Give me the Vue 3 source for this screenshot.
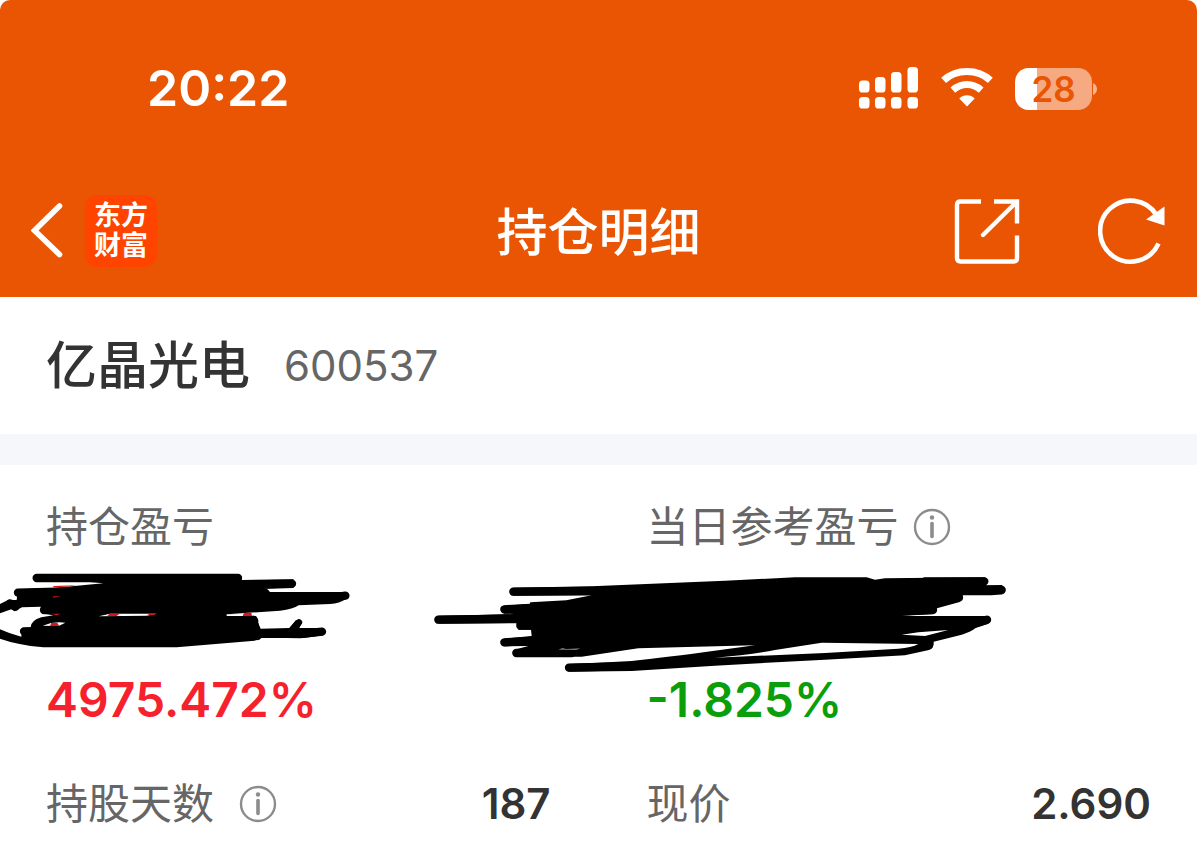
<template>
  <div class="page">
    <header class="header">
      <div class="status-bar">
        <span class="time">20:22</span>
        <div class="status-icons">
          <svg class="signal" width="60" height="43" viewBox="0 0 60 43" fill="#fff">
            <rect v-for="bar in signalBars" :key="bar.x" :x="bar.x" :y="bar.y" width="10.5" :height="25.5 - bar.y" rx="3.6" />
            <rect v-for="bar in signalBars" :key="'d' + bar.x" :x="bar.x" y="30" width="10.5" height="11.5" rx="3.6" />
          </svg>
          <svg class="wifi" width="52" height="42" viewBox="0 1 52 42">
            <g fill="none" stroke="#fff" stroke-width="7">
              <path d="M2.6 13.4Q12 4.5 26 4.5T49.4 13.4" />
              <path d="M11.8 23.2Q18 17.6 26 17.6T40.2 23.2" />
            </g>
            <path d="M26 39.5L18.3 31.6Q21.6 28.3 26 28.3T33.7 31.6Z" fill="#fff" />
          </svg>
          <div class="battery">
            <div class="battery-body">
              <div class="battery-level" :style="{ width: batteryLevel + '%' }"></div>
              <span class="battery-text">{{ batteryLevel }}</span>
            </div>
            <svg width="5" height="12" viewBox="0 0 5 12">
              <path d="M0 0Q4 2 4 6T0 12Z" fill="#f6b291" />
            </svg>
          </div>
        </div>
      </div>

      <nav class="nav-bar">
        <div class="nav-left">
          <button class="icon-btn" type="button" aria-label="返回">
            <svg width="32" height="56" viewBox="0 0 32 56">
              <path d="M28.5 3L3.5 27.5L28.5 51.5" fill="none" stroke="#fff" stroke-width="5.6" stroke-linecap="round" />
            </svg>
          </button>
          <a class="logo" href="#">东方<br />财富</a>
        </div>
        <h1 class="title">持仓明细</h1>
        <div class="nav-right">
          <button class="icon-btn" type="button" aria-label="分享">
            <svg width="66" height="66" viewBox="0 0 66 66" fill="none" stroke="#fff" stroke-width="4.4">
              <path d="M27 3.500H6.500Q3 3.500 3 7V60Q3 63.500 6.500 63.500H59.500Q63 63.500 63 60V37.500" />
              <path d="M40 3.500H63V25.500" />
              <path d="M62.500 4L29 37" stroke-linecap="round" />
            </svg>
          </button>
          <button class="icon-btn" type="button" aria-label="刷新">
            <svg width="68" height="68" viewBox="0 0 68 68">
              <path d="M60.500 46.500A30.500 30.500 0 1 1 58.500 18" fill="none" stroke="#fff" stroke-width="4.600" />
              <path d="M66.500 9.500V28.500L48 22.500Z" fill="#fff" />
            </svg>
          </button>
        </div>
      </nav>
    </header>

    <section class="stock">
      <h2 class="stock-name">亿晶光电</h2>
      <span class="stock-code">600537</span>
    </section>

    <main class="detail">
      <div class="cell">
        <div class="label">持仓盈亏</div>
        <div class="amount">
          <svg class="scribble scribble-left" width="360" height="100" viewBox="0 0 1080 300">
            <path d="M110 42H712Q724 44 726 60L880 58Q886 72 880 84L756 88L800 87L810 96H1036Q1044 106 1036 118Q1020 130 990 132L896 136Q880 148 840 152L680 163L768 168Q778 180 774 188L782 206L868 204L888 180L907 186L898 204H968Q974 214 970 226L910 234H784L764 242L530 262H130Q50 254 0 236V208Q30 222 64 230L66 204L92 202Q92 182 124 172L160 166L126 160L122 140L66 142L44 154L34 148L0 160V132L24 120L50 120L54 88L160 84L310 70L270 66H110Z" />
            <path d="M110 54H714 M54 98L200 94 M30 130L46 140 M132 150H300 M876 71L700 74 M796 99L700 100 M1036 107L960 118L800 110 M72 214H200 M760 180L772 228 M966 215L900 222L780 220" class="pen" />
            <path d="M897 187L876 210" class="pen pen-thin" />
            <path d="M296 169L330 161H470L440 167Z M680 163H756V168H680Z M128 197Q160 184 196 188L176 198Z" fill="#fff" />
            <path d="M160 78L230 76L200 80L160 82Z M328 162H358L350 168H322Z M448 161H470L456 166H442Z M732 158H754L756 168H728Z M154 189H172L178 198H150Z M154 161H182L170 166Z M160 109H182L160 113Z" fill="#d9141b" />
          </svg>
        </div>
        <div class="rate up">4975.472%</div>
      </div>

      <div class="cell">
        <div class="label">
          当日参考盈亏
          <button class="info-btn" type="button" aria-label="当日参考盈亏说明">
            <svg width="38" height="38" viewBox="0 0 38 38">
              <circle cx="19" cy="19" r="17" fill="none" stroke="#8c8c8c" stroke-width="2.400" />
              <circle cx="19" cy="9.500" r="2.200" fill="#8c8c8c" />
              <path d="M19 15.500V28.500" stroke="#8c8c8c" stroke-width="3.600" stroke-linecap="round" />
            </svg>
          </button>
        </div>
        <div class="amount">
          <svg class="scribble scribble-right" width="590" height="115" viewBox="0 0 1770 345">
            <path d="M264 68L500 64L900 47L1110 37H1325L1350 44L1380 40L1680 37L1684 61L1732 60V88L1700 91H1614L1604 111L1536 130L1524 147L1430 153H1690V176L1652 189Q1636 202 1610 209L1526 230Q1528 250 1512 255Q1480 262 1440 271L1200 284L870 302L620 318L430 320V297L520 293L620 288Q720 278 880 256L990 241L640 250L470 275H274V253L310 243L236 244V221L320 213L318 194H280L274 175L40 176V152L160 150L268 147L236 146V122L314 117L316 112L424 106L500 91L264 92Z" />
            <path d="M265 80L500 78 M238 133L330 128 M40 164L280 161 M286 182H400 M238 232L340 226 M274 264H440 M432 308L560 305 M1678 49H1500 M1730 75H1500 M1602 98L1500 110 M1524 135L1400 140 M1686 164L1640 178L1500 222 M1512 240L1440 255" class="pen" />
            <path d="M870 278Q970 270 1050 255L1190 233L1480 237Q1460 248 1420 251L1200 264Z" fill="#fff" />
            <path d="M1430 209L1480 202L1570 195L1500 213Z" fill="#fff" />
            <path d="M400 254L412 249L424 252L466 250L454 255Z" fill="#777" />
          </svg>
        </div>
        <div class="rate down">-1.825%</div>
      </div>

      <div class="row">
        <div class="label label-wide">
          持股天数
          <button class="info-btn" type="button" aria-label="持股天数说明">
            <svg width="38" height="38" viewBox="0 0 38 38">
              <circle cx="19" cy="19" r="17" fill="none" stroke="#8c8c8c" stroke-width="2.400" />
              <circle cx="19" cy="9.500" r="2.200" fill="#8c8c8c" />
              <path d="M19 15.500V28.500" stroke="#8c8c8c" stroke-width="3.600" stroke-linecap="round" />
            </svg>
          </button>
        </div>
        <span class="value">187</span>
      </div>

      <div class="row">
        <div class="label">现价</div>
        <span class="value">2.690</span>
      </div>
    </main>
  </div>
</template>

<script setup>
import { ref } from 'vue'

const batteryLevel = ref(28)

const signalBars = [
  { x: 0, y: 13.5 },
  { x: 16, y: 10 },
  { x: 32, y: 5 },
  { x: 48.5, y: 0 }
]
</script>

<style>
body {
  margin: 0;
  background: #fff;
}
</style>

<style scoped>
.page {
  font-family: Inter, "Noto Sans CJK SC", sans-serif;
  background: #fff;
  color: #333;
  overflow: hidden;
}

.header {
  background: #ea5503;
  color: #fff;
  border-radius: 10px 10px 0 0;
}

.status-bar {
  display: flex;
  justify-content: space-between;
  align-items: center;
  padding: 59px 99px 47px 147px;
  line-height: 59px;
}

.time {
  font-size: 50px;
  font-weight: 600;
}

.status-icons {
  display: flex;
  align-items: center;
  gap: 22px;
}

.battery {
  display: flex;
  align-items: center;
  gap: 1px;
}

.battery-body {
  position: relative;
  width: 77px;
  height: 42px;
  border-radius: 14px;
  background: #f5aa82;
  overflow: hidden;
  text-align: center;
  line-height: 42px;
}

.battery-level {
  position: absolute;
  top: 0;
  left: 0;
  height: 100%;
  background: #fff;
}

.battery-text {
  position: relative;
  color: #ea5503;
  font-size: 35px;
  font-weight: 600;
}

.nav-bar {
  display: grid;
  grid-template-columns: 1fr auto 1fr;
  align-items: center;
  height: 132px;
  padding: 0 31px;
}

.nav-left {
  display: flex;
  align-items: center;
  gap: 22px;
}

.nav-right {
  display: flex;
  align-items: center;
  justify-content: flex-end;
  gap: 78px;
}

.icon-btn,
.info-btn {
  display: flex;
  padding: 0;
  border: 0;
  background: none;
  cursor: pointer;
}

.logo {
  width: 72px;
  height: 72px;
  box-sizing: border-box;
  padding-top: 6px;
  border-radius: 12px;
  background: #ff4400;
  color: #fff;
  font-size: 27px;
  font-weight: 700;
  line-height: 30px;
  text-align: center;
  text-decoration: none;
}

.title {
  margin: 0;
  padding-top: 4px;
  font-size: 51px;
  font-weight: 500;
  line-height: 60px;
}

.stock {
  display: flex;
  align-items: center;
  gap: 34px;
  height: 137px;
  padding: 0 46px;
  border-bottom: 31px solid #f6f7fa;
}

.stock-name {
  margin: 0;
  font-size: 51px;
  font-weight: 500;
  line-height: 60px;
}

.stock-code {
  color: #666;
  font-size: 42px;
  line-height: 60px;
}

.detail {
  display: grid;
  grid-template-columns: 1fr 1fr;
  column-gap: 96px;
  row-gap: 44px;
  padding: 32px 46px 19px;
}

.label {
  display: flex;
  align-items: center;
  gap: 14px;
  color: #666;
  font-size: 42px;
  line-height: 60px;
}

.label-wide {
  gap: 25px;
}

.amount {
  position: relative;
  height: 113px;
}

.scribble {
  position: absolute;
}

.scribble-left {
  top: 3px;
  left: -46px;
}

.scribble-right {
  top: 8px;
  left: -222px;
}

.pen {
  fill: none;
  stroke: #000;
  stroke-width: 25px;
  stroke-linecap: round;
  stroke-linejoin: round;
}

.pen-thin {
  stroke-width: 19px;
}

.rate {
  font-size: 48px;
  font-weight: 600;
  line-height: 60px;
}

.up {
  color: #f5222d;
}

.down {
  color: #0a9f0a;
}

.row {
  display: flex;
  justify-content: space-between;
  align-items: center;
}

.value {
  font-size: 42px;
  font-weight: 600;
  line-height: 60px;
}
</style>
